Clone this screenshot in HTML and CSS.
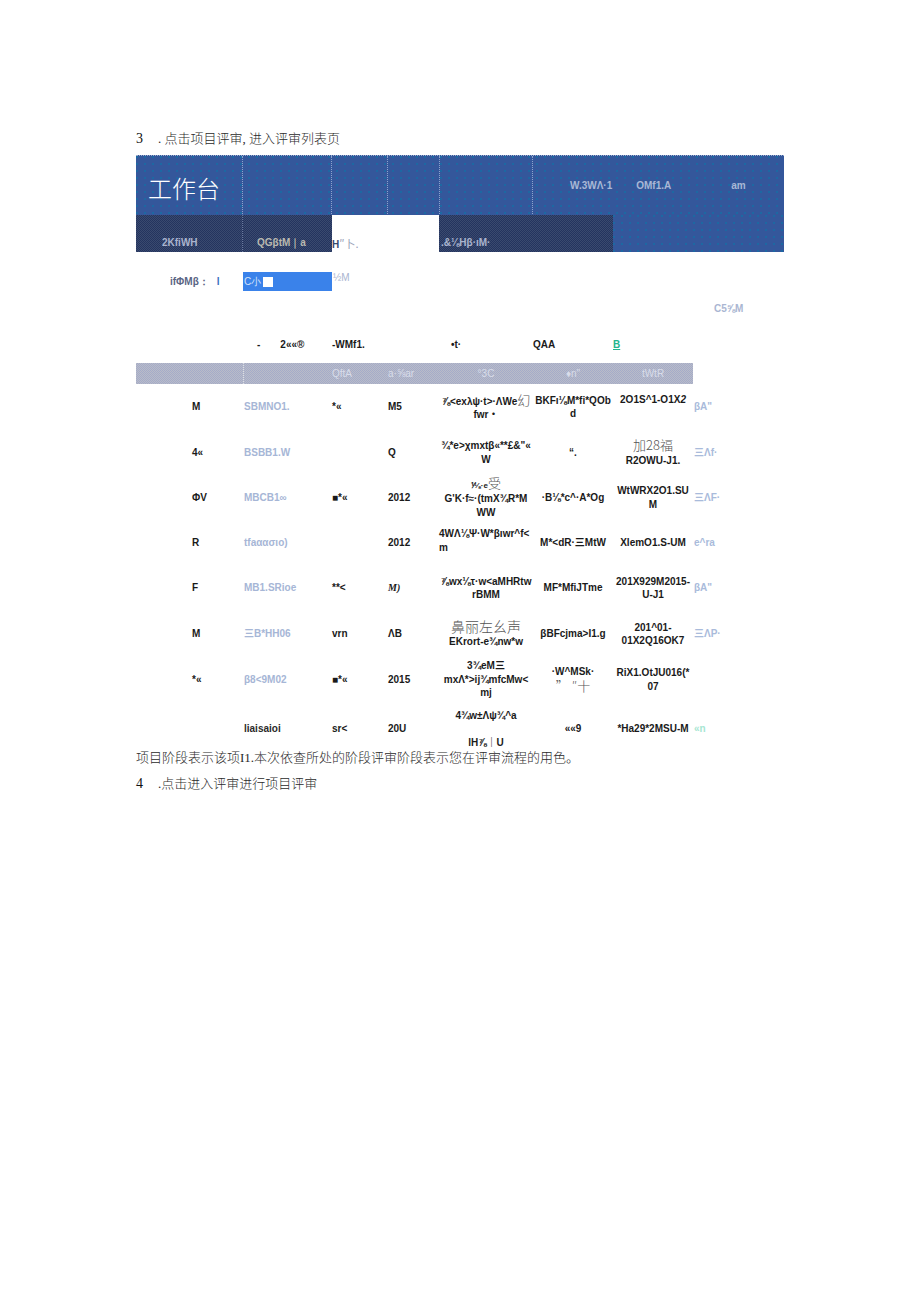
FILE: index.html

```html
<!DOCTYPE html>
<html>
<head>
    <meta charset="utf-8">
    <title>项目评审</title>
    <link rel="stylesheet" href="styles.css">
</head>
<body>
<div class="page">
    <p class="step step-first"><b class="num">3</b><span class="dot">.</span> 点击项目评审, 进入评审列表页</p>

    <div class="banner">
        <div class="bcell logo">工作台</div>
        <div class="bcell"></div>
        <div class="bcell"></div>
        <div class="bcell"></div>
        <div class="bcell"></div>
        <div class="bmenu"><span class="m1">W.3WΛ·1</span><span class="m2">OMf1.A</span><span class="m3">am</span></div>
    </div>
    <div class="nav">
        <div class="tab tab-a">2KfiWH</div>
        <div class="tab tab-b">QGβtM｜a</div>
        <div class="tab tab-on"><b>H</b>″卜.</div>
        <div class="tab tab-c">.&amp;⅛Hβ·ıM·</div>
        <div class="nav-rest"></div>
    </div>

    <div class="filter">
        <div class="filter-label">ifΦMβ：<span class="bar">l</span></div>
        <div class="filter-box">C小<i class="square"></i></div>
        <div class="filter-after">½M</div>
    </div>
    <div class="action">C5⅝M</div>

    <div class="table">
        <div class="row row-top">
            <div></div>
            <div class="top-two"><span>-</span><span>2««®</span></div>
            <div>-WMf1.</div>
            <div></div>
            <div class="top-five">•t·</div>
            <div>QAA</div>
            <div class="link">B</div>
        </div>
        <div class="row row-head">
            <div></div>
            <div class="line"></div>
            <div>QftA</div>
            <div>a·⅝ar</div>
            <div class="mid">°3C</div>
            <div class="mid">♦n"</div>
            <div class="mid">tWtR</div>
        </div>

        <div class="row r1">
            <div class="c1">M</div><div class="c2">SBMNO1.</div><div>*«</div><div>M5</div>
            <div class="mid">⅞&lt;exλψ·t&gt;·ΛWe<span class="cjk">幻</span><br>fwr・</div>
            <div class="mid">BKFı⅛M*fi*QOb<br>d</div>
            <div class="mid up">2O1S^1-O1X<i>2</i></div>
            <div class="c8">βA"</div>
        </div>
        <div class="row r2">
            <div class="c1">4«</div><div class="c2">BSBB1.W</div><div></div><div>Q</div>
            <div class="mid">¾*e&gt;χmxtβ«**£&amp;"«<br>W</div>
            <div class="mid">“.</div>
            <div class="mid"><span class="cjk">加28福</span><br>R2OWU-J1.</div>
            <div class="c8">三Λf·</div>
        </div>
        <div class="row r3">
            <div class="c1">ΦV</div><div class="c2">MBCB1∞</div><div>■*«</div><div>2012</div>
            <div class="mid"><span class="small">⅟⅛·e</span><span class="cjk">受</span><br>G'K·f≈·(tmX¾R*M<br>WW</div>
            <div class="mid">·B⅛*c^·A*Og</div>
            <div class="mid">WtWRX2O1.SU<br>M</div>
            <div class="c8">三ΛF·</div>
        </div>
        <div class="row r4">
            <div class="c1">R</div><div class="c2">tfaαασιο)</div><div></div><div>2012</div>
            <div class="up-left">4WΛ⅛Ψ·W*βıwr^f&lt;<br>m</div>
            <div class="mid">M*&lt;dR·三MtW</div>
            <div class="mid">XlemO1.S-UM</div>
            <div class="c8">e^ra</div>
        </div>
        <div class="row r5">
            <div class="c1">F</div><div class="c2">MB1.SRioe</div><div>**&lt;</div><div class="serif">M)</div>
            <div class="mid">⅞wx⅛τ·w&lt;aMHRtw<br>rBMM</div>
            <div class="mid">MF*MfiJTme</div>
            <div class="mid">201X929M2015-<br>U-J1</div>
            <div class="c8">βA"</div>
        </div>
        <div class="row r6">
            <div class="c1">M</div><div class="c2">三B*HH06</div><div>vrn</div><div>ΛB</div>
            <div class="mid"><span class="cjk wide">鼻丽左幺声</span><br>EKrort-e¾nw*w</div>
            <div class="mid">βBFcjma&gt;I1.g</div>
            <div class="mid">201^01-<br>01X2Q16OK7</div>
            <div class="c8">三ΛP·</div>
        </div>
        <div class="row r7">
            <div class="c1">*«</div><div class="c2">β8&lt;9M02</div><div>■*«</div><div>2015</div>
            <div class="mid">3¾eM三<br>mxΛ*&gt;ij¾mfcMw&lt;<br>mj</div>
            <div class="mid">·W^MSk·<br><span class="cjk ten">” ″十</span></div>
            <div class="mid">RiX1.OtJU016(*<br>07</div>
            <div class="c8"></div>
        </div>
        <div class="row r8">
            <div class="c1"></div><div class="c2 dark">liaisaioi</div><div>sr&lt;</div><div>20U</div>
            <div class="mid tall">4¾w±Λψ¾^a<br>lH⅞｜U</div>
            <div class="mid">««9</div>
            <div class="mid">*Ha29*2MSU-M</div>
            <div class="c8 green">«n</div>
        </div>
    </div>

    <p class="step step-note">项目阶段表示该项<b>I1.</b>本次依查所处的阶段评审阶段表示您在评审流程的用色。</p>
    <p class="step step-last"><b class="num">4</b><b class="dot">.</b>点击进入评审进行项目评审</p>
</div>
</body>
</html>
```

FILE: styles.css

```css
html, body { margin: 0; padding: 0; background: #fff; }
.page { width: 648px; min-height: 1171px; padding: 130px 136px 0 136px; font-family: "Liberation Serif", "Noto Sans CJK SC", serif; color: #2a2a2a; }

.step { margin: 0; font-size: 13px; line-height: 18px; font-weight: 300; }
.num { display: inline-block; width: 22px; font-size: 14px; color: #111; }
.step-first { height: 25px; }
.step-note { margin-top: 2px; }
.step-last { margin-top: 8px; }

/* banner */
.banner { display: grid; grid-template-columns: 107px 89px 56px 52px 93px 251px; height: 60px; background-color: #34579b; background-image: radial-gradient(circle at 1px 1px, #1b6aa3 .7px, transparent .8px); background-size: 8px 7px; border-top: 1px dotted #9fb0d0; box-sizing: border-box; }
.bcell { border-right: 1px dotted #8ea3cb; box-sizing: border-box; }
.logo { color: #fff; font-family: "Noto Sans CJK SC", sans-serif; font-weight: 300; font-size: 24px; line-height: 64px; padding-left: 12px; }
.bmenu { display: flex; font-family: "Liberation Sans", sans-serif; font-weight: bold; font-size: 10px; color: #a9b7d6; padding-top: 23px; line-height: 14px; }
.m1 { margin-left: 37px; }
.m2 { margin-left: 24px; }
.m3 { margin-left: 60px; }

.nav { display: grid; grid-template-columns: 107px 89px 107px 174px 171px; height: 35px; font-family: "Liberation Sans", sans-serif; font-weight: bold; font-size: 10px; }
.tab { padding-top: 21px; line-height: 14px; box-sizing: border-box; color: #aab4ce; background: repeating-conic-gradient(#24345f 0 25%, #3a4a6e 0 50%) 0 0 / 2px 2px; }
.tab-a { padding-left: 26px; border-right: 1px dotted #6c7b9e; }
.tab-b { padding-left: 14px; color: #b9b9b0; }
.tab-on { background: #fff; color: #9aa3b8; font-weight: normal; font-family: "Noto Sans CJK SC", sans-serif; font-size: 11px; }
.tab-on b { font-family: "Liberation Sans", sans-serif; font-size: 10px; color: #3a4a6e; }
.tab-c { padding-left: 2px; }
.nav-rest { background-color: #34579b; background-image: radial-gradient(circle at 1px 1px, #1b6aa3 .7px, transparent .8px); background-size: 8px 7px; }

.filter { display: flex; margin-top: 22px; font-family: "Liberation Sans", sans-serif; font-size: 10px; }
.filter-label { width: 107px; box-sizing: border-box; padding: 3px 0 0 34px; font-weight: bold; color: #5a6584; line-height: 14px; }
.bar { color: #3a6fc0; margin-left: 8px; }
.filter-box { display: flex; align-items: center; width: 89px; height: 19px; color: #d5e3fb; background-color: #3a82ea; font-size: 10px; padding-left: 1px; box-sizing: border-box; }
.square { display: inline-block; width: 10px; height: 10px; background: #fff; margin-left: 2px; }
.filter-after { margin-left: 1px; color: #a9b4d0; line-height: 12px; }

.action { margin-top: 12px; padding-left: 578px; font-family: "Liberation Sans", sans-serif; font-weight: bold; font-size: 10px; line-height: 12px; color: #aab6d2; }

/* table */
.table { margin-top: 23px; width: 648px; font-family: "Liberation Sans", "Noto Sans CJK SC", sans-serif; font-weight: bold; font-size: 10px; line-height: 13.5px; color: #1a1a1a; }
.row { display: grid; grid-template-columns: 107px 89px 56px 51px 94px 80px 80px 91px; align-items: center; }
.row-top { height: 25px; align-items: start; }
.top-two { display: flex; padding-left: 14px; gap: 20px; }
.top-five { padding-left: 12px; }
.link { color: #23b58d; text-decoration: underline; }
.row-head { width: 557px; grid-template-columns: 107px 89px 56px 51px 94px 80px 80px; height: 21px; color: #d8dcea; font-weight: normal; background: repeating-conic-gradient(#a4abc9 0 25%, #b9bcc8 0 50%) 0 0 / 2px 2px; }
.line { height: 100%; border-left: 1px dotted #d8dcea; }
.r1 { height: 46px; } .r2 { height: 45px; } .r3 { height: 45px; } .r4 { height: 45px; }
.r5 { height: 46px; } .r6 { height: 46px; } .r7 { height: 45px; } .r8 { height: 45px; }
.c1 { padding-left: 56px; }
.c2 { padding-left: 1px; color: #a6b6d6; }
.c2.dark { color: #2a2a2a; }
.c8 { padding-left: 1px; color: #a9bbdb; }
.green { color: #a6e6d2; }
.mid { text-align: center; }
.up { margin-bottom: 14px; }
.up-left { margin-bottom: 4px; white-space: nowrap; }
.tall { line-height: 27px; }
.serif { font-family: "Liberation Serif", serif; font-style: italic; }
.cjk { font-family: "Noto Sans CJK SC", sans-serif; font-weight: 300; font-size: 13px; color: #555; }
.small { font-size: 8px; }
.wide { font-size: 14px; }
```
